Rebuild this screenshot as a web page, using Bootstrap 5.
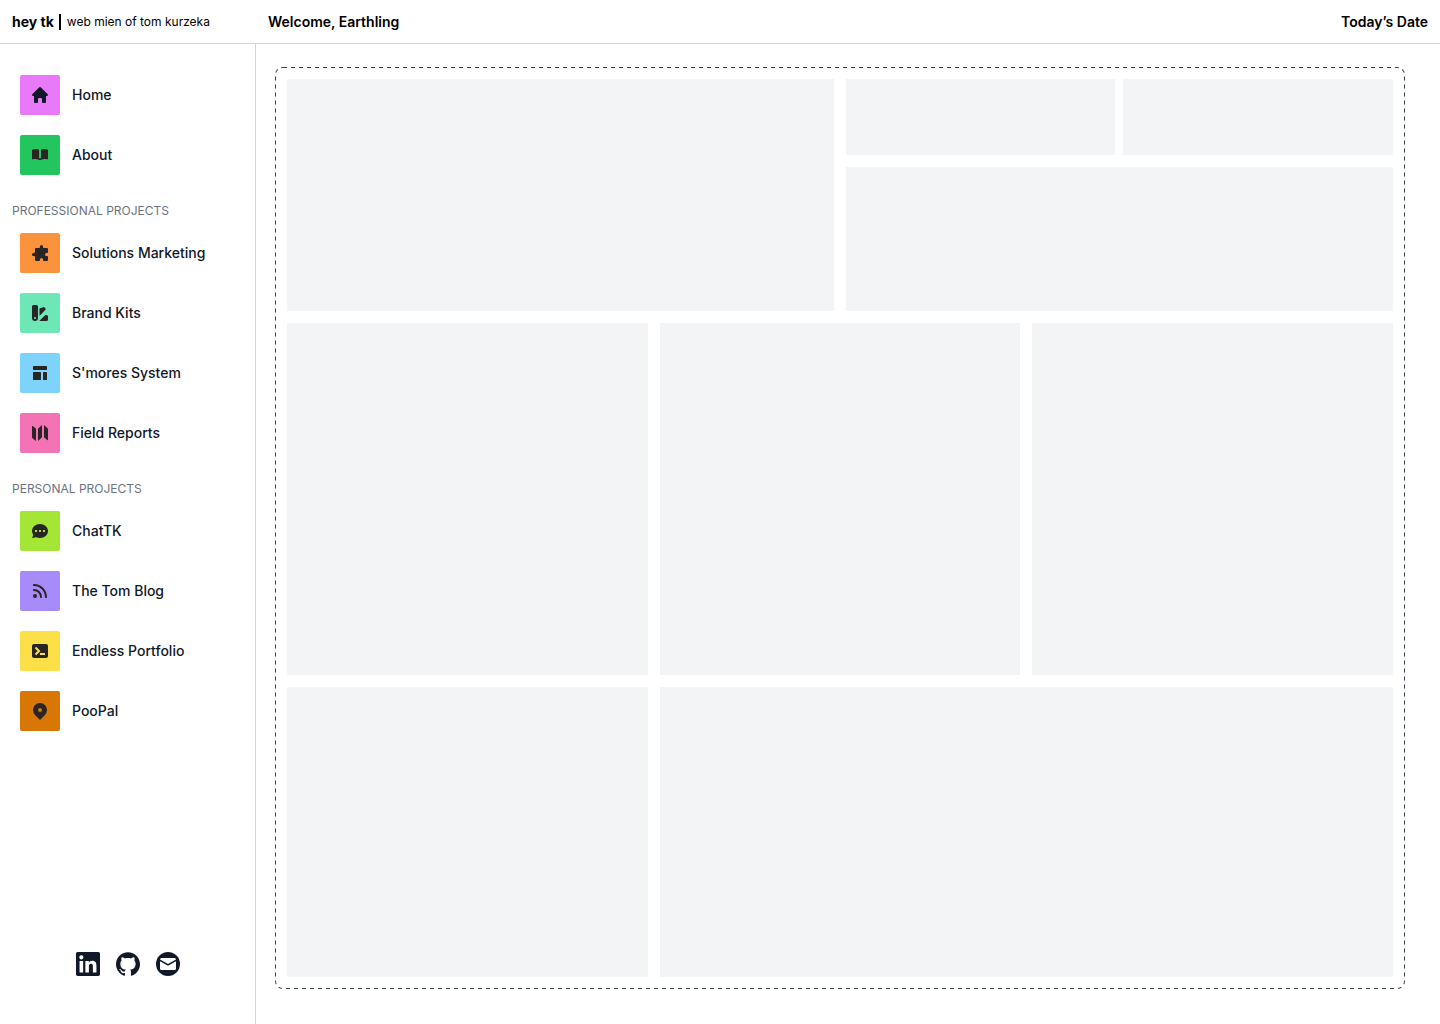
<!DOCTYPE html>
<html lang="en">
<head>
<meta charset="utf-8">
<meta name="viewport" content="width=device-width, initial-scale=1">
<title>hey tk</title>
<link href="https://cdn.jsdelivr.net/npm/bootstrap@5.3.0/dist/css/bootstrap.min.css" rel="stylesheet">
<style>
  body { font-family: Inter, "Liberation Sans", sans-serif; font-size: 14px; line-height: 20px; color: #111827; background: #fff; }
  .topbar { height: 44px; border-bottom: 1px solid #d1d5db; color: #000; }
  .brand-side { width: 256px; padding-left: 12px; gap: 6px; }
  .brand-name { font-weight: 700; border-right: 2px solid #000; padding-right: 5px; line-height: 16px; }
  .tagline { font-size: 12px; }
  .greeting { padding: 0 12px; }
  .sidebar { width: 256px; border-right: 1px solid #d1d5db; padding: 31px 12px 48px; }
  .nav-group { gap: 20px; padding-left: 8px; }
  .nav-group a { gap: 12px; color: #111827; font-weight: 500; }
  .group-label { font-size: 12px; line-height: 16px; font-weight: 400; color: #6b7280; margin: 28px 0 14px; }
  .swatch { width: 40px; height: 40px; border-radius: 2px; background: var(--tone); color: #292524; }
  .swatch svg { width: 20px; height: 20px; fill: currentColor; }
  .swatch .ink { color: #111827; }
  .socials { gap: 16px; }
  .socials a { color: #111827; }
  .socials svg { width: 24px; height: 24px; display: block; fill: currentColor; }
  .stage { padding: 23px 35px 35px 19px; min-width: 0; }
  .frame { padding: 12px; }
  /* the outer half of the 2px stroke is clipped, leaving a crisp 1px dash */
  .outline { inset: 0; width: 100%; height: 100%; border-radius: 8px; overflow: hidden; pointer-events: none; }
  .outline rect { fill: none; stroke: #374151; stroke-width: 2; stroke-dasharray: 4 4; }
  .bento { display: grid; grid-template-columns: repeat(6, 1fr); grid-template-rows: 232px 352px minmax(290px, 1fr); gap: 12px; }
  .tile { background: #f3f4f6; }
  .span-2 { grid-column: span 2; }
  .span-3 { grid-column: span 3; }
  .span-4 { grid-column: span 4; }
  .stack { gap: 12px; }
  .short { height: 76px; }
</style>
<script src="https://cdn.jsdelivr.net/npm/bootstrap@5.3.0/dist/js/bootstrap.bundle.min.js"></script>
</head>
<body class="d-flex flex-column min-vh-100">
<header class="topbar d-flex align-items-center flex-shrink-0">
  <div class="brand-side d-flex align-items-center flex-shrink-0">
    <span class="brand-name">hey tk</span><span class="tagline">web mien of tom kurzeka</span>
  </div>
  <div class="greeting d-flex flex-grow-1 justify-content-between fw-semibold">
    <span>Welcome, Earthling</span><span>Today’s Date</span>
  </div>
</header>
<div class="d-flex flex-grow-1">
  <aside class="sidebar d-flex flex-column justify-content-between flex-shrink-0">
    <nav>
      <div class="nav-group d-flex flex-column">
        <a href="#" class="d-flex align-items-center text-decoration-none">
          <span class="swatch d-flex align-items-center justify-content-center" style="--tone:#e879f9"><svg class="ink" viewBox="0 0 20 20"><path d="M9.3 2.3a1 1 0 0 1 1.4 0l7 7c.6.6.2 1.7-.7 1.7h-1v6a1 1 0 0 1-1 1h-2a1 1 0 0 1-1-1v-3a1 1 0 0 0-1-1H9a1 1 0 0 0-1 1v3a1 1 0 0 1-1 1H5a1 1 0 0 1-1-1v-6H3c-.9 0-1.3-1.1-.7-1.7l7-7Z"/></svg></span>Home</a>
        <a href="#" class="d-flex align-items-center text-decoration-none">
          <span class="swatch d-flex align-items-center justify-content-center" style="--tone:#22c55e"><svg viewBox="0 0 20 20"><path d="M3 4.6C4.600 3.900 7 3.800 8.600 4.500Q9 4.700 9 5.100V12.500A1 1 0 0 0 11 12.500V5.100Q11 4.700 11.400 4.500C13 3.800 15.400 3.900 17.300 4.500Q18 4.700 18 5.300V13.700Q18 14.500 17.200 14.300C15 13.800 13 13.900 11.700 14.500 11.200 15.200 8.800 15.200 8.300 14.500 7 13.900 5 13.800 2.800 14.300Q2 14.500 2 13.700V5.300Q2 4.900 3 4.600Z"/></svg></span>About</a>
      </div>
      <h2 class="group-label">PROFESSIONAL PROJECTS</h2>
      <div class="nav-group d-flex flex-column">
        <a href="#" class="d-flex align-items-center text-decoration-none">
          <span class="swatch d-flex align-items-center justify-content-center" style="--tone:#fb923c"><svg viewBox="0 0 20 20"><path d="M10 3.500a1.500 1.500 0 0 1 3 0V4a1 1 0 0 0 1 1h3a1 1 0 0 1 1 1v3a1 1 0 0 1-1 1h-.5a1.500 1.500 0 0 0 0 3h.5a1 1 0 0 1 1 1v3a1 1 0 0 1-1 1h-3a1 1 0 0 1-1-1v-.5a1.500 1.500 0 0 0-3 0v.5a1 1 0 0 1-1 1H6a1 1 0 0 1-1-1v-3a1 1 0 0 0-1-1h-.5a1.500 1.500 0 0 1 0-3H4a1 1 0 0 0 1-1V6a1 1 0 0 1 1-1h3a1 1 0 0 0 1-1v-.5Z"/></svg></span>Solutions Marketing</a>
        <a href="#" class="d-flex align-items-center text-decoration-none">
          <span class="swatch d-flex align-items-center justify-content-center" style="--tone:#6ee7b7"><svg viewBox="0 0 20 20"><path fill-rule="evenodd" d="M3.500 2A1.500 1.500 0 0 0 2 3.500V15a3 3 0 1 0 6 0V3.500A1.500 1.500 0 0 0 6.500 2h-3ZM5 16a1 1 0 1 0 0-2 1 1 0 0 0 0 2Z"/><path d="M9.500 12.900 15.200 7.100a1.500 1.500 0 0 0 0-2.100l-.7-.5a1.500 1.500 0 0 0-2 0L9.500 5.500ZM9.300 18h7.200a1.500 1.500 0 0 0 1.500-1.500v-3a1.500 1.500 0 0 0-1.500-1.500h-1.200Z"/></svg></span>Brand Kits</a>
        <a href="#" class="d-flex align-items-center text-decoration-none">
          <span class="swatch d-flex align-items-center justify-content-center" style="--tone:#7dd3fc"><svg viewBox="0 0 20 20"><rect x="3" y="3" width="14" height="4" rx=".5"/><rect x="3" y="9" width="8" height="8" rx=".5"/><rect x="13" y="9" width="4" height="8" rx=".5"/></svg></span>S'mores System</a>
        <a href="#" class="d-flex align-items-center text-decoration-none">
          <span class="swatch d-flex align-items-center justify-content-center" style="--tone:#f472b6"><svg viewBox="0 0 20 20"><path d="M2 3.500Q2 2.500 2.800 3.100L6 5.700V18L2.500 15.200Q2 14.800 2 14ZM8 5.700 12 2V14.300L8 18ZM14 2 17.500 5.200Q18 5.700 18 6.300V16.500Q18 17.500 17.200 16.900L14 14.300Z"/></svg></span>Field Reports</a>
      </div>
      <h2 class="group-label">PERSONAL PROJECTS</h2>
      <div class="nav-group d-flex flex-column">
        <a href="#" class="d-flex align-items-center text-decoration-none">
          <span class="swatch d-flex align-items-center justify-content-center" style="--tone:#a3e635"><svg viewBox="0 0 20 20"><path fill-rule="evenodd" d="M18 10c0 3.900-3.600 7-8 7a8.800 8.800 0 0 1-3.800-.8L2 17l1.300-3.100A6.500 6.500 0 0 1 2 10c0-3.900 3.600-7 8-7s8 3.100 8 7ZM7 9H5v2h2V9Zm8 0h-2v2h2V9ZM9 9h2v2H9V9Z"/></svg></span>ChatTK</a>
        <a href="#" class="d-flex align-items-center text-decoration-none">
          <span class="swatch d-flex align-items-center justify-content-center" style="--tone:#a78bfa"><svg viewBox="0 0 20 20"><path d="M3.750 3a.75.75 0 0 0-.75.75v.5c0 .414.336.75.75.75H4c6.075 0 11 4.925 11 11v.25c0 .414.336.75.75.75h.5a.75.75 0 0 0 .75-.75V16C17 8.820 11.180 3 4 3h-.25Z"/><path d="M3 8.750A.75.75 0 0 1 3.750 8H4a8 8 0 0 1 8 8v.25a.75.75 0 0 1-.75.75h-.5a.75.75 0 0 1-.75-.75V16a6 6 0 0 0-6-6h-.25A.75.75 0 0 1 3 9.250v-.5ZM7 15a2 2 0 1 1-4 0 2 2 0 0 1 4 0Z"/></svg></span>The Tom Blog</a>
        <a href="#" class="d-flex align-items-center text-decoration-none">
          <span class="swatch d-flex align-items-center justify-content-center" style="--tone:#fde047"><svg viewBox="0 0 20 20"><rect x="2" y="3" width="16" height="14" rx="2"/><path d="M5.500 6.500 9 10l-3.500 3.500M10 13h5" fill="none" stroke="var(--tone)" stroke-width="2"/></svg></span>Endless Portfolio</a>
        <a href="#" class="d-flex align-items-center text-decoration-none">
          <span class="swatch d-flex align-items-center justify-content-center" style="--tone:#d97706"><svg viewBox="0 0 20 20"><path fill-rule="evenodd" d="M5.050 4.050a7 7 0 1 1 9.900 9.900L10 18.900l-4.950-4.950a7 7 0 0 1 0-9.900ZM10 11a2 2 0 1 0 0-4 2 2 0 0 0 0 4Z"/></svg></span>PooPal</a>
      </div>
    </nav>
    <div class="socials d-flex justify-content-center">
      <a href="#" aria-label="LinkedIn"><svg viewBox="0 0 24 24"><path d="M20.447 20.452h-3.554v-5.569c0-1.328-.027-3.037-1.852-3.037-1.853 0-2.136 1.445-2.136 2.939v5.667H9.351V9h3.414v1.561h.046c.477-.9 1.637-1.850 3.370-1.850 3.601 0 4.267 2.370 4.267 5.455v6.286zM5.337 7.433c-1.144 0-2.063-.926-2.063-2.065 0-1.138.92-2.063 2.063-2.063 1.140 0 2.064.925 2.064 2.063 0 1.139-.925 2.065-2.064 2.065zm1.782 13.019H3.555V9h3.564v11.452zM22.225 0H1.771C.792 0 0 .774 0 1.729v20.542C0 23.227.792 24 1.771 24h20.451C23.200 24 24 23.227 24 22.271V1.729C24 .774 23.200 0 22.222 0h.003z"/></svg></a>
      <a href="#" aria-label="GitHub"><svg viewBox="0 0 24 24"><path d="M12 .297c-6.630 0-12 5.373-12 12 0 5.303 3.438 9.800 8.205 11.385.6.113.82-.258.82-.577 0-.285-.01-1.040-.015-2.040-3.338.724-4.042-1.610-4.042-1.610C4.422 18.070 3.633 17.700 3.633 17.700c-1.087-.744.084-.729.084-.729 1.205.084 1.838 1.236 1.838 1.236 1.070 1.835 2.809 1.305 3.495.998.108-.776.417-1.305.76-1.605-2.665-.3-5.466-1.332-5.466-5.930 0-1.310.465-2.380 1.235-3.220-.135-.303-.54-1.523.105-3.176 0 0 1.005-.322 3.300 1.230.96-.267 1.980-.399 3-.405 1.020.006 2.040.138 3 .405 2.280-1.552 3.285-1.230 3.285-1.230.645 1.653.24 2.873.12 3.176.765.84 1.230 1.910 1.230 3.220 0 4.610-2.805 5.625-5.475 5.920.42.36.81 1.096.81 2.220 0 1.606-.015 2.896-.015 3.286 0 .315.21.69.825.57C20.565 22.092 24 17.592 24 12.297c0-6.627-5.373-12-12-12"/></svg></a>
      <a href="#" aria-label="Email"><svg viewBox="0 0 24 24"><circle cx="12" cy="12" r="12"/><path d="M5.500 6h13Q20 6 20 7.500L12 12 4 7.500Q4 6 5.500 6ZM4 9.300l8 4.500 8-4.500v7.200Q20 18 18.500 18h-13Q4 18 4 16.500Z" fill="#fff"/></svg></a>
    </div>
  </aside>
  <main class="stage d-flex flex-grow-1">
    <div class="frame position-relative d-flex flex-grow-1">
      <svg class="outline position-absolute" aria-hidden="true"><rect width="100%" height="100%" rx="8"/></svg>
      <div class="bento flex-grow-1">
        <div class="tile span-3"></div>
        <div class="stack span-3 d-flex flex-column">
          <div class="short d-flex gap-2 flex-shrink-0"><div class="tile flex-fill"></div><div class="tile flex-fill"></div></div>
          <div class="tile flex-grow-1"></div>
        </div>
        <div class="tile span-2"></div>
        <div class="tile span-2"></div>
        <div class="tile span-2"></div>
        <div class="tile span-2"></div>
        <div class="tile span-4"></div>
      </div>
    </div>
  </main>
</div>
</body>
</html>
